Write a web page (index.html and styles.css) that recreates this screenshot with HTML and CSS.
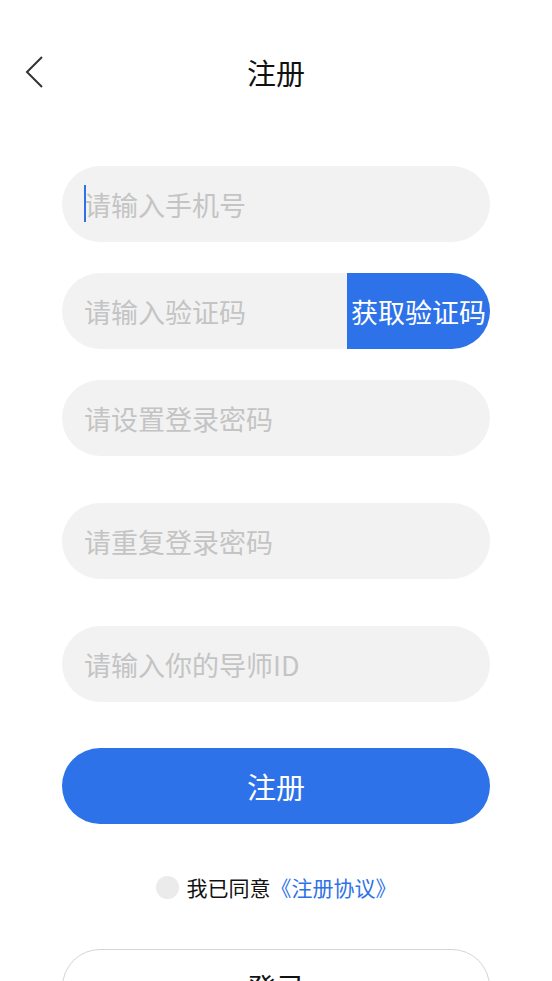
FILE: index.html
```html
<!DOCTYPE html>
<html lang="zh-CN">
<head>
    <meta charset="UTF-8">
    <title>注册</title>
    <link rel="stylesheet" href="styles.css">
</head>
<body>
<div class="page">
    <div class="header">
        <a class="back" href="#">
            <svg width="20" height="34" viewBox="0 0 20 34">
                <polyline points="17,2 2,17 17,32" fill="none" stroke="#333" stroke-width="2"/>
            </svg>
        </a>
        <div class="title">注册</div>
    </div>
    <div class="form">
        <div class="field">
            <span class="caret"></span>
            <input type="text" placeholder="请输入手机号">
        </div>
        <div class="field code_row">
            <input type="text" placeholder="请输入验证码">
            <button class="code_btn">获取验证码</button>
        </div>
        <div class="field field_lg">
            <input type="password" placeholder="请设置登录密码">
        </div>
        <div class="field field_lg">
            <input type="password" placeholder="请重复登录密码">
        </div>
        <div class="field field_lg">
            <input type="text" placeholder="请输入你的导师ID">
        </div>
        <button class="submit_btn">注册</button>
        <div class="agree">
            <span class="radio"></span>
            <span>我已同意</span><a href="#">《注册协议》</a>
        </div>
        <button class="login_btn">登录</button>
    </div>
</div>
</body>
</html>
```

FILE: styles.css
```css
* {
    box-sizing: border-box;
}

body {
    margin: 0;
    background: #fff;
    font-family: "Noto Sans CJK SC", "Noto Sans", sans-serif;
    color: #111;
}

.page {
    width: 552px;
    height: 981px;
    overflow: hidden;
}

.header {
    position: relative;
    padding-top: 52px;
    height: 92px;
    text-align: center;
}

.back {
    position: absolute;
    left: 25px;
    top: 55px;
    display: block;
}

.title {
    font-size: 29px;
    line-height: 40px;
}

.form {
    width: 428px;
    margin: 74px auto 0;
}

.field {
    position: relative;
    height: 76px;
    margin-bottom: 31px;
    display: flex;
}

.field_lg {
    margin-bottom: 47px;
}

.field:nth-child(5) {
    margin-bottom: 46px;
}

.field input {
    flex: 1;
    width: 100%;
    height: 76px;
    border: none;
    outline: none;
    border-radius: 38px;
    background: #f2f2f2;
    padding: 0 0 0 22px;
    font-family: inherit;
    font-size: 27px;
    color: #333;
}

.field input::placeholder {
    color: #c4c4c4;
}

.caret {
    position: absolute;
    left: 22px;
    top: 19px;
    width: 2px;
    height: 37px;
    background: #2d72e8;
}

.code_row input {
    border-radius: 38px 0 0 38px;
}

.code_btn {
    width: 143px;
    height: 76px;
    border: none;
    border-radius: 0 38px 38px 0;
    background: #2d72e8;
    color: #fff;
    font-family: inherit;
    font-size: 27px;
    padding: 0;
    white-space: nowrap;
}

.submit_btn {
    display: block;
    width: 100%;
    height: 76px;
    border: none;
    border-radius: 38px;
    background: #2d72e8;
    color: #fff;
    font-family: inherit;
    font-size: 29px;
}

.agree {
    display: flex;
    align-items: center;
    justify-content: center;
    height: 30px;
    margin-top: 48px;
    font-size: 21px;
    color: #111;
}

.radio {
    width: 23px;
    height: 23px;
    border-radius: 50%;
    background: #ebebeb;
    margin-right: 8px;
}

.agree a {
    color: #2d72e8;
    text-decoration: none;
}

.login_btn {
    display: block;
    width: 100%;
    height: 76px;
    margin-top: 47px;
    border: solid 1px #d4d4d4;
    border-radius: 38px;
    background: #fff;
    color: #111;
    font-family: inherit;
    font-size: 29px;
}
```
